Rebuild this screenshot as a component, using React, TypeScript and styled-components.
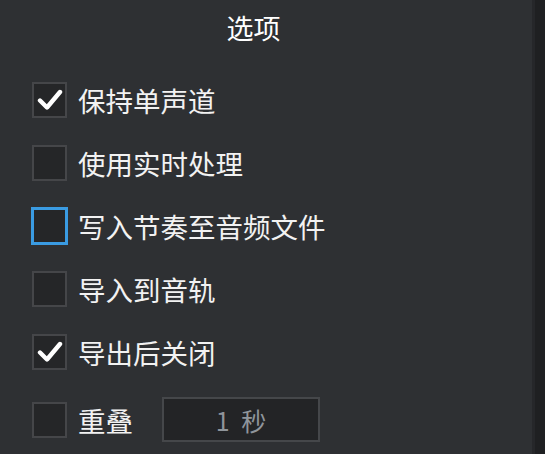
import React, { useState } from 'react';
import styled, { createGlobalStyle } from 'styled-components';

const GlobalStyle = createGlobalStyle`
  html, body {
    margin: 0;
    padding: 0;
    background-color: #2e3033;
  }
  body {
    font-family: "Noto Sans CJK SC", "Noto Sans", sans-serif;
  }
`;

const Window = styled.div`
  display: flex;
  width: 545px;
  height: 454px;
  overflow: hidden;
  background-color: #2e3033;
`;

const OptionsPanel = styled.div`
  flex: 1;
  display: flex;
  flex-direction: column;
`;

const SideStrip = styled.div`
  width: 10px;
  background-color: #1f2022;
  border-left: 3px solid #26272a;
`;

const PanelTitle = styled.div`
  height: 56px;
  line-height: 56px;
  padding-right: 25px;
  text-align: center;
  font-size: 27px;
  color: #ffffff;
`;

const OptionList = styled.div`
  display: flex;
  flex-direction: column;
  gap: 27px;
  padding: 26px 0 0 32px;
`;

const OptionRow = styled.div`
  display: flex;
  align-items: center;
  min-height: 36px;
  gap: 11px;
  cursor: pointer;
`;

const Box = styled.div<{ focused?: boolean }>`
  box-sizing: border-box;
  width: 35px;
  height: 36px;
  display: flex;
  align-items: center;
  justify-content: center;
  background-color: #252628;
  border: 2px solid ${props => (props.focused ? '#3a9be2' : '#454649')};
  outline: ${props => (props.focused ? '1px solid #3a9be2' : 'none')};
`;

const Label = styled.span`
  font-size: 27.5px;
  line-height: 36px;
  color: #f2f2f2;
  white-space: nowrap;
`;

const DurationField = styled.div`
  box-sizing: border-box;
  width: 158px;
  height: 45px;
  margin-left: 18px;
  display: flex;
  align-items: center;
  justify-content: center;
  background-color: #232426;
  border: 2px solid #45474a;
  font-size: 25px;
  color: #8f959b;
  word-spacing: 6px;
`;

const CheckMark = () => (
  <svg width="26" height="22" viewBox="0 0 26 22">
    <polyline
      points="3,11.5 10,18.5 23,3"
      fill="none"
      stroke="#ffffff"
      strokeWidth="4.4"
      strokeLinecap="round"
      strokeLinejoin="round"
    />
  </svg>
);

type Option = {
  id: number;
  label: string;
  checked: boolean;
  focused?: boolean;
};

const initialOptions: Option[] = [
  { id: 1, label: '保持单声道', checked: true },
  { id: 2, label: '使用实时处理', checked: false },
  { id: 3, label: '写入节奏至音频文件', checked: false, focused: true },
  { id: 4, label: '导入到音轨', checked: false },
  { id: 5, label: '导出后关闭', checked: true },
  { id: 6, label: '重叠', checked: false },
];

const App: React.FC = () => {
  const [options, setOptions] = useState<Option[]>(initialOptions);

  const toggle = (id: number) => {
    setOptions(options.map(o => (o.id === id ? { ...o, checked: !o.checked } : o)));
  };

  return (
    <Window>
      <GlobalStyle />
      <OptionsPanel>
        <PanelTitle>选项</PanelTitle>
        <OptionList>
          {options.map(option => (
            <OptionRow key={option.id} onClick={() => toggle(option.id)}>
              <Box focused={option.focused}>{option.checked && <CheckMark />}</Box>
              <Label>{option.label}</Label>
              {option.id === 6 && <DurationField>1 秒</DurationField>}
            </OptionRow>
          ))}
        </OptionList>
      </OptionsPanel>
      <SideStrip />
    </Window>
  );
};

export default App;
